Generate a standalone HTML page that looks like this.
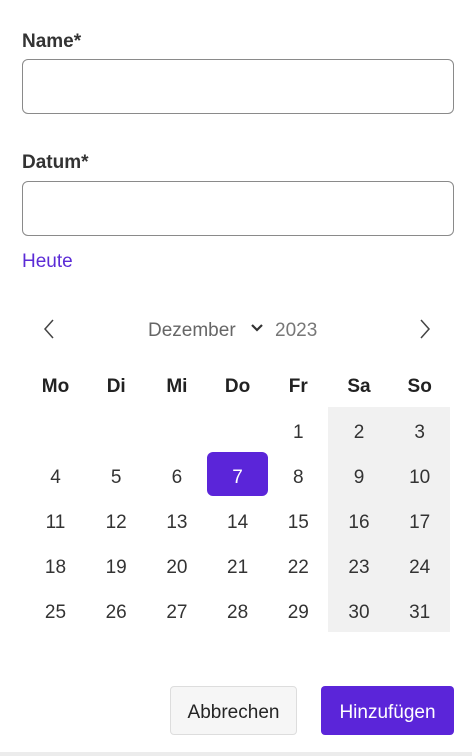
<!DOCTYPE html>
<html><head><meta charset="utf-8"><style>
*{box-sizing:border-box;margin:0;padding:0}
body{width:472px;height:756px;background:#fff;font-family:"Liberation Sans",sans-serif;color:#242424;position:relative;overflow:hidden}
.lbl{position:absolute;left:22px;font-size:19px;font-weight:bold;color:#333}
.inp{position:absolute;left:22px;width:432px;height:55px;border:1px solid #8a8a8a;border-radius:6px}
.abs{position:absolute}
.c{position:absolute;width:61px;text-align:center;font-size:19px;line-height:45px;color:#333}
.h{font-weight:bold;color:#222}
</style></head><body>
<div class="lbl" style="top:31px">Name*</div>
<div class="inp" style="top:59px"></div>
<div class="lbl" style="top:152px">Datum*</div>
<div class="inp" style="top:181px"></div>
<div class="abs" style="left:22px;top:251px;font-size:19px;color:#5b2bd6">Heute</div>
<svg class="abs" style="left:42px;top:318px" width="14" height="22"><path d="M11 2L3 11l8 9" fill="none" stroke="#444" stroke-width="1.5"/></svg>
<svg class="abs" style="left:418px;top:318px" width="14" height="22"><path d="M3 2l8 9-8 9" fill="none" stroke="#444" stroke-width="1.5"/></svg>
<div class="abs" style="left:148px;top:320px;font-size:19px;color:#666">Dezember</div>
<svg class="abs" style="left:250px;top:323px" width="14" height="10"><path d="M2 2l5 5 5-5" fill="none" stroke="#333" stroke-width="2.2"/></svg>
<div class="abs" style="left:275px;top:320px;font-size:19px;color:#777">2023</div>
<div class="abs" style="left:328px;top:407px;width:122px;height:225px;background:#f1f1f1"></div>
<div class="abs" style="left:207px;top:452px;width:61px;height:44px;background:#5b25d9;border-radius:6px"></div>
<div id="g"></div>
<div class="abs" style="left:170px;top:686px;width:127px;height:49px;background:#f6f6f6;border:1px solid #ddd;border-radius:4px;font-size:19px;line-height:51px;text-align:center;color:#242424">Abbrechen</div>
<div class="abs" style="left:321px;top:686px;width:133px;height:49px;background:#5b25d9;border-radius:4px;font-size:19px;line-height:53px;text-align:center;color:#fff">Hinzufügen</div>
<div class="abs" style="left:0;top:752px;width:472px;height:4px;background:#ececec"></div>
<script>
var g=document.getElementById('g'),h='',d=['Mo','Di','Mi','Do','Fr','Sa','So'];
for(var i=0;i<7;i++)h+='<div class="c h" style="left:'+(25+i*60.7)+'px;top:364px">'+d[i]+'</div>';
for(var n=1;n<=31;n++){var p=n+3,r=Math.floor(p/7),col=p%7;
h+='<div class="c" style="left:'+(25+col*60.7)+'px;top:'+(410+r*45)+'px'+(n==7?';color:#fff':'')+'">'+n+'</div>';}
g.innerHTML=h;
</script>
</body></html>
